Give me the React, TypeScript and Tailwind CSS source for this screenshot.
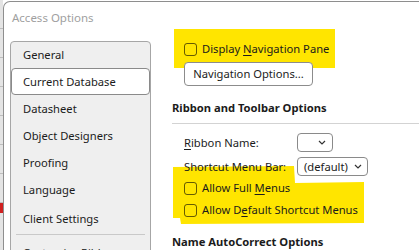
import React from "react";

const font = { fontFamily: '"Noto Sans", "Open Sans", sans-serif' };

function Chevron() {
  return (
    <svg width="8" height="5" viewBox="0 0 8 5" className="block">
      <path d="M1 1 L4 4 L7 1" fill="none" stroke="#333" strokeWidth="1.2" />
    </svg>
  );
}

function Check({ children }: { children: React.ReactNode }) {
  return (
    <div className="flex items-center h-[16px] pl-[12px] shrink-0">
      <div className="w-[13px] h-[13px] rounded-[3px] border border-black/60 bg-transparent shrink-0" />
      <div className="ml-[5px] whitespace-nowrap">{children}</div>
    </div>
  );
}

const navItems = [
  "General",
  "Current Database",
  "Datasheet",
  "Object Designers",
  "Proofing",
  "Language",
];

export default function App() {
  return (
    <div
      className="relative w-[419px] h-[250px] overflow-hidden bg-white flex text-[11.2px] text-[#1b1b1b] leading-[16px]"
      style={font}
    >
      {/* background window strip */}
      <div className="w-[3px] h-full bg-[#e4e4e4] flex flex-col shrink-0">
        <div className="h-[29px] shrink-0 border-b border-[#bdbdbd]" />
        <div className="h-[29px] shrink-0 border-b border-[#bdbdbd]" />
        <div className="h-[29px] shrink-0 border-b border-[#bdbdbd]" />
        <div className="h-[29px] shrink-0 border-b border-[#bdbdbd]" />
        <div className="h-[29px] shrink-0 border-b border-[#bdbdbd]" />
        <div className="h-[29px] shrink-0 border-b border-[#bdbdbd]" />
        <div className="h-[29px] shrink-0 border-b border-[#bdbdbd]" />
        <div className="h-[10px] shrink-0 bg-[#d02020]" />
      </div>

      {/* dialog */}
      <div className="flex-1 mt-[1px] border-t border-l border-[#8e8e8e] rounded-tl-[7px] bg-white flex flex-col min-w-0">
        <div className="h-[39px] shrink-0 pl-[8px] pt-[8px] text-[11.5px] text-[#a0a0a0] whitespace-nowrap">Access Options</div>
        <div className="flex shrink-0">
          {/* nav */}
          <div className="ml-[6px] w-[141px] border border-[#a6a6a6] rounded-[4px] bg-[#efefef] flex flex-col shrink-0">
            {navItems.map((n, i) => (
              <div
                key={n}
                className={
                  (i === 1
                    ? "bg-white border-[#8a8a8a] h-[27px] "
                    : i === 0
                    ? "border-transparent h-[26px] "
                    : "border-transparent h-[27px] ") +
                  "shrink-0 border rounded-[4px] pl-[11px] flex items-center whitespace-nowrap"
                }
              >
                {n}
              </div>
            ))}
            <div className="shrink-0 border border-transparent h-[31px] pl-[11px] flex items-center whitespace-nowrap">
              Client Settings
            </div>
            <div className="shrink-0 mx-[5px] h-px bg-[#c9c9c9]" />
            <div className="shrink-0 pl-[12px] pt-[10px] pb-[20px] whitespace-nowrap">Customize Ribbon</div>
          </div>

          {/* content */}
          <div className="relative z-[2] ml-[21px] flex-1 flex flex-col">
            <Check>
              Display <span className="underline underline-offset-2">N</span>avigation Pane
            </Check>
            <div className="shrink-0 mt-[5px] ml-[12px] w-[129px] h-[24px] border border-[#8c8c8c] rounded-[4px] bg-white flex items-center justify-center whitespace-nowrap">
              Navigation Options...
            </div>
            <div className="shrink-0 mt-[14px] font-bold whitespace-nowrap">Ribbon and Toolbar Options</div>
            <div className="shrink-0 mt-[7px] h-px bg-[#d3d3d3]" />
            <div className="shrink-0 mt-[9px] flex items-center h-[19px] pl-[12px]">
              <div className="w-[113px] whitespace-nowrap">
                <span className="underline underline-offset-2">R</span>ibbon Name:
              </div>
              <div className="w-[36px] h-[19px] border border-[#8a8a8a] rounded-[4px] bg-white flex items-center justify-end pr-[6px]">
                <Chevron />
              </div>
            </div>
            <div className="shrink-0 mt-[5px] flex items-center h-[19px] pl-[12px]">
              <div className="w-[113px] whitespace-nowrap">Shortcut Menu Bar:</div>
              <div className="w-[71px] h-[19px] border border-[#8a8a8a] rounded-[4px] bg-white flex items-center pl-[6px] pr-[5px] justify-between">
                <span className="whitespace-nowrap">(default)</span>
                <Chevron />
              </div>
            </div>
            <div className="shrink-0 mt-[4px]">
              <Check>
                Allow Full <span className="underline underline-offset-2">M</span>enus
              </Check>
            </div>
            <div className="shrink-0 mt-[6px]">
              <Check>
                Allow D<span className="underline underline-offset-2">e</span>fault Shortcut Menus
              </Check>
            </div>
            <div className="shrink-0 mt-[16px] font-bold whitespace-nowrap">Name AutoCorrect Options</div>
          </div>
        </div>
      </div>

      {/* highlighter annotations */}
      <svg className="absolute inset-0 z-[1] pointer-events-none" width="419" height="250">
        <polygon points="174,29 335,29 335,68 174,68" fill="#ffe500" />
        <polygon points="173,167 294,166 295,183 364,182 364,223 181,224 180,218 173,218" fill="#ffe500" />
      </svg>
    </div>
  );
}
